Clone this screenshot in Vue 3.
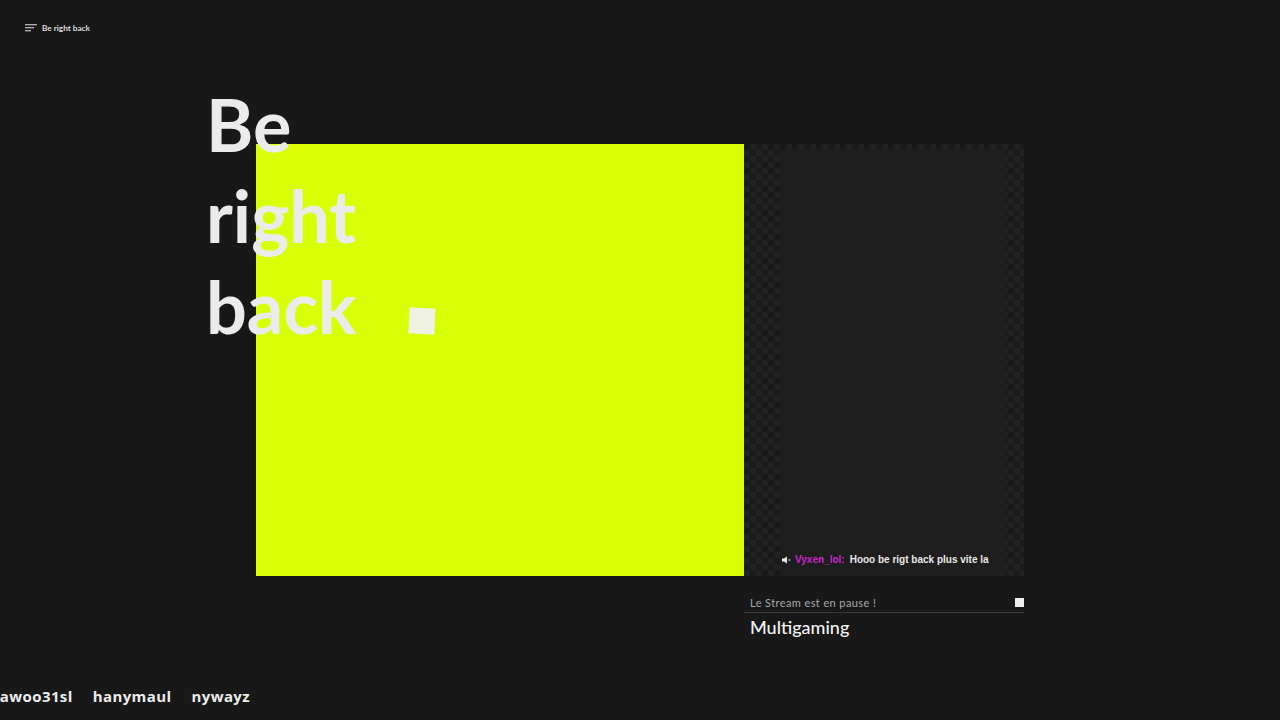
<script setup>
const words = ['Be', 'right', 'back']
const names = ['awoo31sl', 'hanymaul', 'nywayz']
</script>

<template>
    <div class="page">
        <header class="topbar">
            <svg class="menu-icon" width="12" height="8" viewBox="0 0 12 8">
                <path d="M0 .75h12M0 3.75h9M0 6.75h6" stroke="#e4e4e4" stroke-width="1.1" fill="none" />
            </svg>
            <span>Be right back</span>
        </header>

        <main class="stage">
            <div class="title">
                <div v-for="word in words" :key="word">{{ word }}</div>
            </div>
            <div class="square"></div>
            <div class="screen"></div>
            <aside class="chat">
                <div class="chat-inner">
                    <div class="message">
                        <svg class="speaker" width="9" height="8" viewBox="0 0 9 8">
                            <path d="M0 2.5h2L5 .5v7l-3-2H0z" fill="#e8e8e8" />
                            <path d="M6.5 3h2v2h-2z" fill="#8a8a8a" />
                        </svg>
                        <span class="author">Vyxen_lol:</span>
                        <span class="text">Hooo be rigt back plus vite la</span>
                    </div>
                </div>
            </aside>
        </main>

        <section class="info">
            <div class="info-top">
                <span>Le Stream est en pause !</span>
                <i class="dot"></i>
            </div>
            <div class="category">Multigaming</div>
        </section>

        <footer class="ticker">
            <span v-for="name in names" :key="name">{{ name }}</span>
        </footer>
    </div>
</template>

<style>
html,
body {
    margin: 0;
    background: #181818;
}
</style>

<style scoped>
.page {
    position: relative;
    width: 1280px;
    height: 720px;
    overflow: hidden;
    background: #181818;
    color: #ececec;
    font-family: "Lato", "Liberation Sans", sans-serif;
}

.topbar {
    display: flex;
    align-items: center;
    gap: 5px;
    height: 12px;
    padding: 22px 0 0 25px;
    font-size: 8.2px;
    font-weight: 700;
    color: #dedede;
}

.stage {
    position: relative;
    display: flex;
    width: 768px;
    height: 432px;
    margin: 110px 0 0 256px;
}

.screen {
    width: 488px;
    background: #d9ff06;
}

.chat {
    box-sizing: border-box;
    width: 280px;
    padding: 6px 18px 0 36px;
    background-color: #1a1a1a;
    background-image: conic-gradient(#212121 25%, #1a1a1a 0 50%, #212121 0 75%, #1a1a1a 0);
    background-size: 12px 12px;
}

.chat-inner {
    display: flex;
    align-items: flex-end;
    height: 100%;
    box-sizing: border-box;
    padding: 0 0 11px 2px;
    background: #1e1e1e;
}

.message {
    display: flex;
    align-items: center;
    font-family: "Liberation Sans", Arial, sans-serif;
    font-size: 10px;
    font-weight: 700;
    white-space: nowrap;
}

.speaker {
    margin-right: 4px;
}

.author {
    margin-right: 5px;
    color: #cc22cc;
}

.text {
    color: #e8e8e8;
}

.title {
    position: absolute;
    z-index: 1;
    top: -65px;
    left: -50px;
    font-size: 72px;
    font-weight: 700;
    line-height: 91px;
    color: #ebebeb;
}

.square {
    position: absolute;
    z-index: 1;
    top: 164px;
    left: 153px;
    width: 26px;
    height: 26px;
    background: #eff1e2;
    transform: rotate(3deg);
}

.info {
    width: 274px;
    margin: 18px 0 0 750px;
}

.info-top {
    display: flex;
    align-items: center;
    justify-content: space-between;
    height: 17px;
    margin-left: -6px;
    padding: 0 0 1px 6px;
    border-bottom: 1px solid #3a3a3a;
    font-size: 11px;
    letter-spacing: 0.4px;
    color: #a8a8a8;
}

.dot {
    width: 9px;
    height: 9px;
    background: #ededed;
}

.category {
    margin-top: 3px;
    font-size: 18px;
    font-weight: 500;
    color: #f4f4f4;
}

.ticker {
    position: absolute;
    bottom: 14px;
    left: 0;
    display: flex;
    justify-content: flex-end;
    gap: 20px;
    width: 250px;
    overflow: hidden;
    font-family: "Open Sans", "Liberation Sans", sans-serif;
    font-size: 15px;
    font-weight: 700;
    letter-spacing: 0.4px;
    white-space: nowrap;
    color: #ececec;
}
</style>
